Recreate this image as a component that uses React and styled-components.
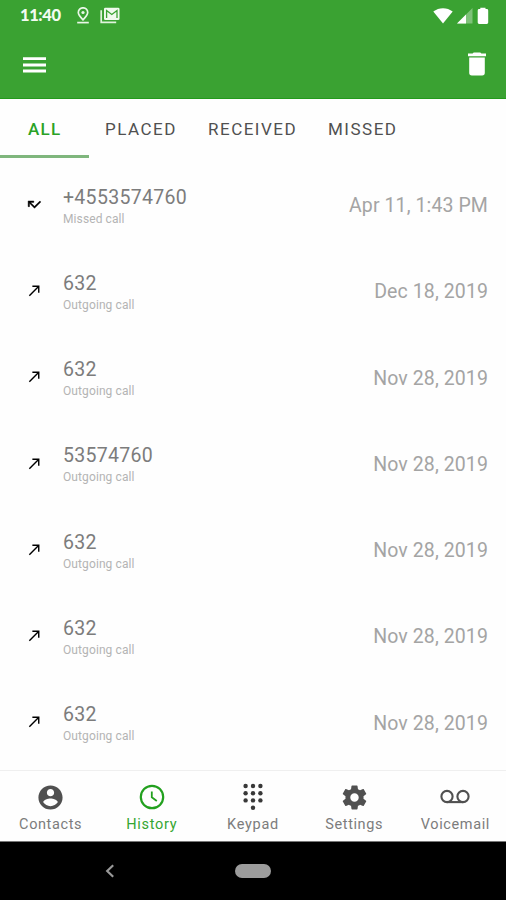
import React from "react";
import styled, { createGlobalStyle } from "styled-components";

const GlobalStyle = createGlobalStyle`
  * { box-sizing: border-box; }
  body { margin: 0; background: #fff; font-family: Roboto, "Noto Sans", sans-serif; }
`;

const Screen = styled.div`
  display: flex;
  flex-direction: column;
  width: 506px;
  height: 900px;
  overflow: hidden;
  background: #fefefe;
`;

const Header = styled.header`
  flex: none;
  height: 99px;
  background: #3aa232;
  border-bottom: 1px solid #229a1b;
  color: #fff;
`;

const StatusBar = styled.div`
  display: flex;
  align-items: center;
  height: 31px;
  padding: 0 17px 0 20px;
`;

const Clock = styled.span`
  width: 56px;
  font: 900 16.5px/31px Lato, "Open Sans", sans-serif;
  letter-spacing: -0.4px;
  color: #f3fbf1;
`;

const StatusGroup = styled.div`
  display: flex;
  align-items: center;
  gap: ${(p) => p.$gap}px;
  margin-left: ${(p) => (p.$end ? "auto" : "0")};
`;

const ActionBar = styled.div`
  display: flex;
  align-items: center;
  justify-content: space-between;
  height: 67px;
  padding: 0 20px 0 23px;
`;

const IconButton = styled.button`
  display: flex;
  padding: 0;
  border: 0;
  background: none;
  color: #fff;
`;

const Tabs = styled.nav`
  display: flex;
  flex: none;
  height: 63px;
`;

const Tab = styled.button`
  flex: none;
  width: ${(p) => p.$width}px;
  height: 59px;
  padding: 4px 0 0 ${(p) => p.$inset}px;
  border: 0;
  border-bottom: 3px solid ${(p) => (p.$active ? "#7fb67d" : "transparent")};
  background: none;
  color: ${(p) => (p.$active ? "#2aa226" : "#505050")};
  font: ${(p) => (p.$active ? 500 : 400)} 17px/52px Roboto, sans-serif;
  letter-spacing: ${(p) => (p.$active ? 1.3 : 1.5)}px;
  text-align: left;
`;

const CallList = styled.ul`
  flex: 1;
  min-height: 0;
  margin: 0;
  padding: 0;
  list-style: none;
`;

const CallRow = styled.li`
  display: flex;
  align-items: center;
  height: 86.25px;
  padding: 0 18px 0 26px;
`;

const CallIcon = styled.span`
  display: flex;
  width: 37px;
  padding-bottom: 1.5px;
`;

const CallText = styled.div`
  flex: 1;
  padding-top: 3px;
`;

const Number = styled.div`
  color: #7c7c7c;
  font-size: 19.5px;
  line-height: 24px;
  letter-spacing: 0.3px;
`;

const Kind = styled.div`
  color: #b4b4b4;
  font-size: 12px;
  line-height: 18px;
  letter-spacing: 0.1px;
`;

const CallDate = styled.time`
  padding-top: 1px;
  color: #a4a4a4;
  font-size: 19.5px;
  letter-spacing: 0.1px;
`;

const BottomNav = styled.nav`
  display: grid;
  grid-template-columns: repeat(5, 1fr);
  flex: none;
  height: 71px;
  border-top: 1px solid #efefef;
`;

const NavItem = styled.button`
  display: flex;
  flex-direction: column;
  align-items: center;
  justify-content: flex-start;
  padding: 13px 0 0;
  border: 0;
  background: none;
  color: ${(p) => (p.$active ? "#22a01e" : "#505050")};
`;

const NavIcon = styled.span`
  display: flex;
  align-items: center;
  justify-content: center;
  height: 26px;
`;

const NavLabel = styled.span`
  margin-top: 5px;
  color: ${(p) => (p.$active ? "#35a632" : "#7c7c7c")};
  font: 400 14.5px/20px Roboto, sans-serif;
  letter-spacing: ${(p) => p.$spacing}px;
`;

const SystemBar = styled.footer`
  display: grid;
  grid-template-columns: 220px 66px 220px;
  align-items: center;
  justify-items: center;
  flex: none;
  height: 59px;
  border-top: 1px solid #777;
  background: #000;
`;

const HomePill = styled.span`
  width: 36px;
  height: 14px;
  border-radius: 7px;
  background: #9c9c9c;
`;

const Icon = ({ size = 24, d, weight = 0 }) => (
  <svg width={size} height={size} viewBox="0 0 24 24" fill="currentColor" stroke="currentColor" strokeWidth={weight}>
    <path d={d} />
  </svg>
);

const PinIcon = () => (
  <svg width="14" height="17" viewBox="0 0 14 17" fill="none" stroke="#e9f7e7" strokeWidth="1.7">
    <path d="M7 12.8C4.2 10 2.3 8.1 2.3 5.5a4.7 4.7 0 0 1 9.4 0C11.7 8.1 9.8 10 7 12.8z" />
    <circle cx="7" cy="5.5" r="1.6" fill="#e9f7e7" stroke="none" />
    <path d="M1.2 15.6h11.6" />
  </svg>
);

const MailStackIcon = () => (
  <svg width="20" height="17" viewBox="0 0 20 17" fill="none">
    <path d="M1.2 3.2v12.2h15" stroke="#dff3dc" strokeWidth="1.7" />
    <rect x="4" y="0.7" width="15.5" height="12.3" rx="1.3" fill="#f0faee" />
    <path d="M6.6 11V3.5l5.2 4 5.2-4V11" stroke="#3aa232" strokeWidth="1.3" />
  </svg>
);

const WifiIcon = () => (
  <svg width="20" height="16" viewBox="0 0 20 16" fill="#fff">
    <path d="M0.3 3.6C6-1 14-1 19.7 3.6L10 15.4z" />
  </svg>
);

const SignalIcon = () => (
  <svg width="16" height="16" viewBox="0 0 16 16" fill="#fff">
    <path d="M0 15.5L15.5 0v15.5z" opacity="0.35" />
    <path d="M0 15.5L9 6.5v9z" />
  </svg>
);

const BatteryIcon = () => (
  <svg width="12" height="18" viewBox="0 0 12 18" fill="#fff">
    <path d="M3.3 2V0.7h5.2V2h1.3q1.4 0 1.4 1.4v12.2q0 1.4-1.4 1.4H2.1Q.7 17 .7 15.6V3.4Q.7 2 2.1 2z" />
  </svg>
);

const MenuIcon = () => (
  <svg width="23" height="18" viewBox="0 0 23 18" fill="#fff">
    <path d="M0 1.2h23v2.9H0zM0 7.5h23v2.9H0zM0 13.6h23v2.9H0z" />
  </svg>
);

const TrashIcon = () => (
  <svg width="18" height="25" viewBox="0 0 18 25" fill="#fff">
    <path d="M0 1.6h4.6L5.7.5h6.6l1.1 1.1H18v2.7H0zM1.2 5.6h15.6v15.2a2.6 2.6 0 0 1-2.6 2.6H3.8a2.6 2.6 0 0 1-2.6-2.6z" />
  </svg>
);

const ClockIcon = () => (
  <svg width="26" height="26" viewBox="0 0 26 26" fill="none" stroke="currentColor">
    <circle cx="13" cy="13" r="11.2" strokeWidth="2.2" />
    <path d="M12.8 7.5v5.8l5 3.6" strokeWidth="1.8" />
  </svg>
);

const KeypadIcon = () => (
  <svg width="22" height="28" viewBox="0 0 22 28" fill="#383838">
    {[3, 10.2, 17.4].map((y) =>
      [3.6, 11, 18.4].map((x) => <circle key={x + "-" + y} cx={x} cy={y} r="2.2" />)
    )}
    <circle cx="11" cy="24.8" r="2.2" />
  </svg>
);

const VoicemailIcon = () => (
  <svg width="30" height="26" viewBox="0 0 30 26" fill="none" stroke="currentColor" strokeWidth="2.1">
    <circle cx="7" cy="12.5" r="5.6" />
    <circle cx="23" cy="12.5" r="5.6" />
    <path d="M7 18.1h16" />
  </svg>
);

const PERSON =
  "M12 2C6.48 2 2 6.48 2 12s4.48 10 10 10 10-4.48 10-10S17.52 2 12 2zm0 3c1.66 0 3 1.34 3 3s-1.34 3-3 3-3-1.34-3-3 1.34-3 3-3zm0 14.2c-2.5 0-4.71-1.28-6-3.22.03-1.99 4-3.08 6-3.08 1.99 0 5.97 1.09 6 3.08-1.29 1.94-3.5 3.22-6 3.22z";
const GEAR =
  "M19.43 12.98c.04-.32.07-.64.07-.98s-.03-.66-.07-.98l2.11-1.65c.19-.15.24-.42.12-.64l-2-3.46c-.12-.22-.39-.3-.61-.22l-2.49 1c-.52-.4-1.08-.73-1.69-.98l-.38-2.65C14.46 2.18 14.25 2 14 2h-4c-.25 0-.46.18-.49.42l-.38 2.65c-.61.25-1.17.59-1.69.98l-2.49-1c-.23-.09-.49 0-.61.22l-2 3.46c-.13.22-.07.49.12.64l2.11 1.65c-.04.32-.07.65-.07.98s.03.66.07.98l-2.11 1.65c-.19.15-.24.42-.12.64l2 3.46c.12.22.39.3.61.22l2.49-1c.52.4 1.08.73 1.69.98l.38 2.65c.03.24.24.42.49.42h4c.25 0 .46-.18.49-.42l.38-2.65c.61-.25 1.17-.59 1.69-.98l2.49 1c.23.09.49 0 .61-.22l2-3.46c.12-.22.07-.49-.12-.64l-2.11-1.65zM12 15.5c-1.93 0-3.5-1.57-3.5-3.5s1.57-3.5 3.5-3.5 3.5 1.57 3.5 3.5-1.57 3.5-3.5 3.5z";
const MISSED = "M19.59 7L12 14.59 6.41 9H11V7H3v8h2v-4.59l7 7 9-9z";
const MADE = "M9 5v2h6.59L4 18.59 5.41 20 17 8.41V15h2V5z";

const tabs = [
  { label: "ALL", width: 89, inset: 28, active: true },
  { label: "PLACED", width: 103, inset: 16 },
  { label: "RECEIVED", width: 120, inset: 16 },
  { label: "MISSED", width: 102, inset: 16 },
];

const calls = [
  { number: "+4553574760", missed: true, date: "Apr 11, 1:43 PM" },
  { number: "632", date: "Dec 18, 2019" },
  { number: "632", date: "Nov 28, 2019" },
  { number: "53574760", date: "Nov 28, 2019" },
  { number: "632", date: "Nov 28, 2019" },
  { number: "632", date: "Nov 28, 2019" },
  { number: "632", date: "Nov 28, 2019" },
];

const navItems = [
  { label: "Contacts", icon: <Icon size={29} d={PERSON} />, spacing: 0.6 },
  { label: "History", icon: <ClockIcon />, spacing: 0.7, active: true },
  { label: "Keypad", icon: <KeypadIcon />, spacing: 0.7 },
  { label: "Settings", icon: <Icon size={29} d={GEAR} />, spacing: 0.6 },
  { label: "Voicemail", icon: <VoicemailIcon />, spacing: 0.6 },
];

export default function App() {
  return (
    <Screen>
      <GlobalStyle />
      <Header>
        <StatusBar>
          <Clock>11:40</Clock>
          <StatusGroup $gap={10}>
            <PinIcon />
            <MailStackIcon />
          </StatusGroup>
          <StatusGroup $gap={4} $end>
            <WifiIcon />
            <SignalIcon />
            <BatteryIcon />
          </StatusGroup>
        </StatusBar>
        <ActionBar>
          <IconButton aria-label="Menu"><MenuIcon /></IconButton>
          <IconButton aria-label="Delete"><TrashIcon /></IconButton>
        </ActionBar>
      </Header>
      <Tabs>
        {tabs.map((t) => (
          <Tab key={t.label} $width={t.width} $inset={t.inset} $active={t.active}>
            {t.label}
          </Tab>
        ))}
      </Tabs>
      <CallList>
        {calls.map((c, i) => (
          <CallRow key={i}>
            <CallIcon>
              <Icon size={17} d={c.missed ? MISSED : MADE} weight={c.missed ? 0.6 : 0} />
            </CallIcon>
            <CallText>
              <Number>{c.number}</Number>
              <Kind>{c.missed ? "Missed call" : "Outgoing call"}</Kind>
            </CallText>
            <CallDate>{c.date}</CallDate>
          </CallRow>
        ))}
      </CallList>
      <BottomNav>
        {navItems.map((n) => (
          <NavItem key={n.label} $active={n.active}>
            <NavIcon>{n.icon}</NavIcon>
            <NavLabel $active={n.active} $spacing={n.spacing}>{n.label}</NavLabel>
          </NavItem>
        ))}
      </BottomNav>
      <SystemBar>
        <svg width="10" height="14" viewBox="0 0 10 14" fill="none" stroke="#999" strokeWidth="2.2">
          <path d="M8.2 1.2L2.2 7l6 5.8" />
        </svg>
        <HomePill />
      </SystemBar>
    </Screen>
  );
}
